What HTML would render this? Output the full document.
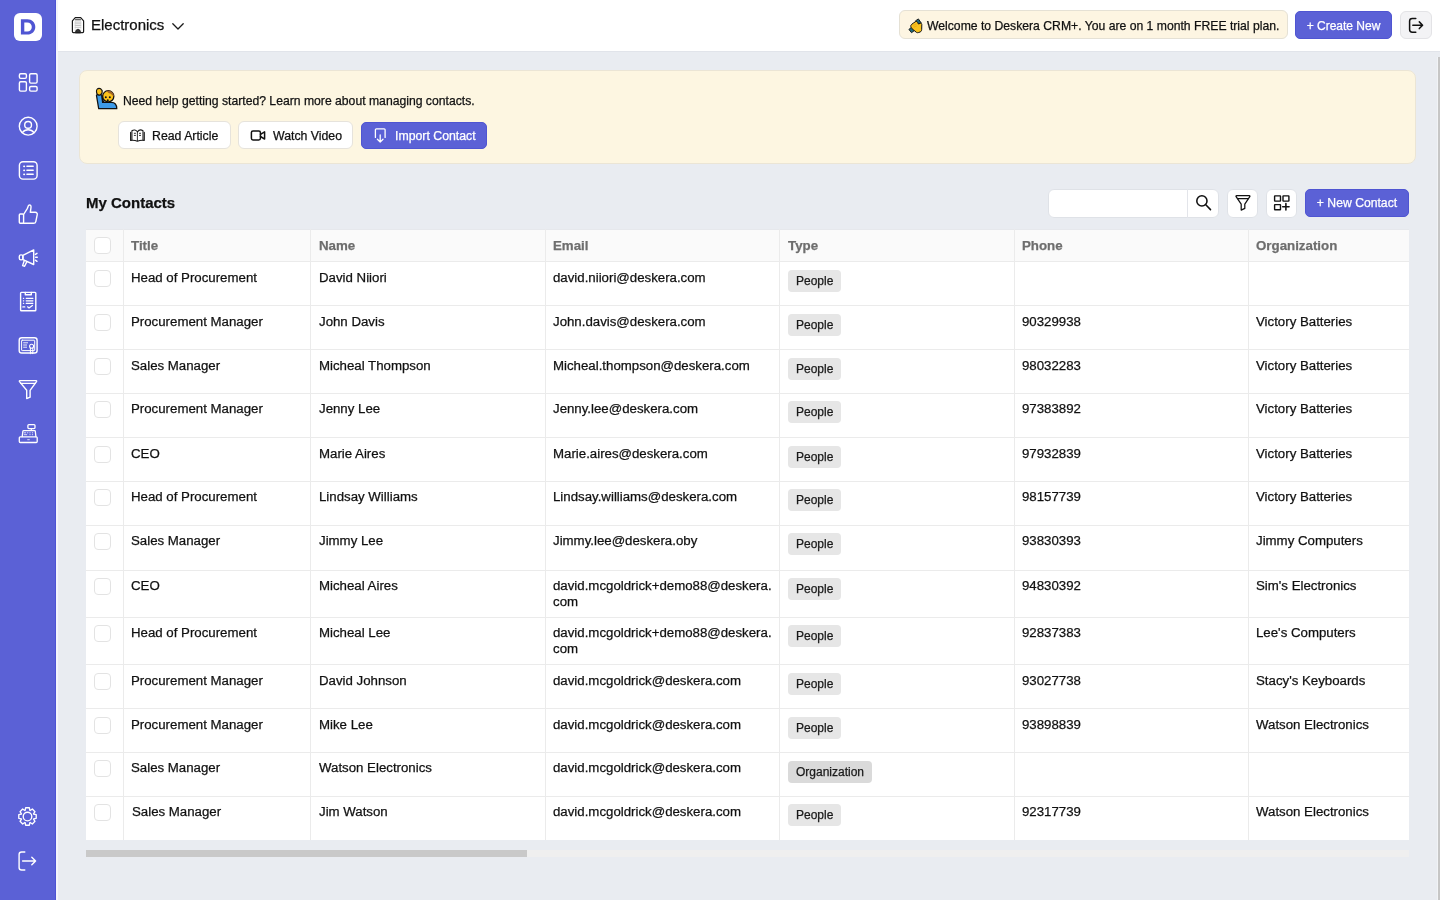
<!DOCTYPE html>
<html><head><meta charset="utf-8">
<style>
*{box-sizing:border-box;margin:0;padding:0}
html,body{width:1440px;height:900px;overflow:hidden}
body{font-family:"Liberation Sans",sans-serif;background:#e9ecf1;color:#111;position:relative}
#wrap div{-webkit-text-stroke:0.25px currentColor}
.abs{position:absolute}
#sidebar{left:0;top:0;width:56px;height:900px;background:#5b61d6}
#sbline{left:56px;top:0;width:2px;height:900px;background:#f4f5fb}
#logo{left:14px;top:13px;width:28px;height:28px;background:#fff;border-radius:6px}
#logo span{position:absolute;left:0;top:0;width:28px;text-align:center;font-weight:bold;font-size:21px;line-height:28px;color:#5b61d6}
.sico{position:absolute;left:18px;width:20px;height:20px}
#header{left:58px;top:0;width:1382px;height:51px;background:#fff}
#hshadow{left:58px;top:51px;width:1382px;height:1px;background:#e1e4ea}
#org{left:91px;top:15px;font-size:15px;line-height:19px;color:#111}
#welcome{left:899px;top:10px;width:389px;height:29px;background:#fdf5e2;border:1px solid #e5e1d5;border-radius:6px;font-size:12.2px;line-height:31px;padding-left:27px;color:#111;white-space:nowrap}
.btnblue{background:#5b61d6;color:#fff;border-radius:5px;font-size:12px;text-align:center;white-space:nowrap;border:1px solid #4f55d2}
#create{left:1295px;top:11px;width:97px;height:28px;line-height:28px}
#logout{left:1400px;top:11px;width:32px;height:28px;background:#f3f3f5;border:1px solid #e3e3e6;border-radius:6px}
#help{left:79px;top:70px;width:1337px;height:94px;background:#fdf6e1;border:1px solid #ebe5d5;border-radius:8px}
#helptext{left:123px;top:94px;font-size:12.2px;line-height:14px;color:#111;white-space:nowrap}
.hbtn{height:28px;background:#fff;border:1px solid #e6e3dc;border-radius:6px;font-size:12.3px;line-height:28px;white-space:nowrap;color:#111}
#mycontacts{left:86px;top:194px;font-size:15px;line-height:18px;font-weight:bold;color:#111}
#search{left:1048px;top:189px;width:171px;height:29px;background:#fff;border:1px solid #dfe2e7;border-radius:6px}
#searchdiv{left:1187px;top:189px;width:1px;height:29px;background:#e3e5ea}
.tbtn{top:189px;width:31px;height:29px;background:#fff;border:1px solid #dfe2e7;border-radius:6px}
#newcontact{left:1305px;top:189px;width:104px;height:28px;line-height:27px;font-size:12.2px}
#tbl{left:86px;top:229px;width:1323px;height:611px;background:#fff}
#thead{left:86px;top:230px;width:1323px;height:31px;background:#fafafa}
.hl{position:absolute;left:86px;width:1323px;height:1px;background:#ebebeb}
.vl{position:absolute;top:229px;width:1px;height:611px;background:#ebebeb}
.th{position:absolute;top:238px;font-size:13.3px;font-weight:bold;color:#6e6e6e;line-height:15px;white-space:nowrap}
.td{position:absolute;font-size:13.25px;line-height:15.5px;color:#111;white-space:nowrap}
.badge{position:absolute;height:21.5px;background:#e6e6e6;border-radius:4px;font-size:12px;line-height:23px;padding:0 8px;color:#1a1a1a;white-space:nowrap}
.cb{position:absolute;left:94px;width:17px;height:17px;border:1px solid #e3e3e3;border-radius:4px;background:#fff}
#hscroll{left:86px;top:850px;width:1323px;height:7px;background:#efefef}
#hthumb{left:86px;top:850px;width:441px;height:7px;background:#c9c9c9}
#vscroll{left:1437px;top:57px;width:3px;height:843px;background:#d0d2d6}
</style></head>
<body>
<div id="wrap" style="position:absolute;left:0;top:0;width:1440px;height:900px;will-change:transform">
<div id="sidebar" class="abs"></div>
<div id="sbline" class="abs"></div>
<div class="abs" style="left:55px;top:0;width:1px;height:900px;background:#4d53d4"></div>
<div class="abs" style="left:1437px;top:57px;width:1px;height:843px;background:#f1f3f6"></div>
<div class="abs" style="left:1438px;top:57px;width:2px;height:843px;background:#c6c6c6"></div>
<div id="logo" class="abs"></div>
<svg class="abs" style="left:0;top:0" width="56" height="56" viewBox="0 0 56 56"><path fill="#4f55d3" fill-rule="evenodd" d="M20.9 19.35 H27.4 C31.9 19.35 35.3 22.7 35.3 27 C35.3 31.3 31.9 34.6 27.4 34.6 H20.9 Z M24.3 22.4 V31.6 H27.2 C30 31.6 31.8 29.6 31.8 27 C31.8 24.4 30 22.4 27.2 22.4 Z"/></svg>

<div id="header" class="abs"></div>
<div id="hshadow" class="abs"></div>
<div id="org" class="abs">Electronics</div>

<div id="welcome" class="abs">Welcome to Deskera CRM+. You are on 1 month FREE trial plan.</div>
<div id="create" class="abs btnblue">+ Create New</div>
<div id="logout" class="abs"></div>

<div id="help" class="abs"></div>
<div id="helptext" class="abs">Need help getting started? Learn more about managing contacts.</div>
<div class="abs hbtn" style="left:118px;top:121px;width:113px;padding-left:33px">Read Article</div>
<div class="abs hbtn" style="left:238px;top:121px;width:115px;padding-left:34px">Watch Video</div>
<div class="abs btnblue" style="left:361px;top:122px;width:126px;height:27px;line-height:27px;text-align:left;padding-left:33px;font-size:12.3px">Import Contact</div>

<div id="mycontacts" class="abs">My Contacts</div>
<div id="search" class="abs"></div>
<div id="searchdiv" class="abs"></div>
<div class="abs tbtn" style="left:1227px"></div>
<div class="abs tbtn" style="left:1266px"></div>
<div id="newcontact" class="abs btnblue">+ New Contact</div>

<div id="tbl" class="abs"></div>
<div id="thead" class="abs"></div>
<div id="rows"><div class="hl" style="top:229px;background:#e6e8ec"></div>
<div class="hl" style="top:261px"></div>
<div class="hl" style="top:305px"></div>
<div class="hl" style="top:349px"></div>
<div class="hl" style="top:393px"></div>
<div class="hl" style="top:437px"></div>
<div class="hl" style="top:481px"></div>
<div class="hl" style="top:525px"></div>
<div class="hl" style="top:570px"></div>
<div class="hl" style="top:617px"></div>
<div class="hl" style="top:664px"></div>
<div class="hl" style="top:708px"></div>
<div class="hl" style="top:752px"></div>
<div class="hl" style="top:796px"></div>
<div class="vl" style="left:123px"></div>
<div class="vl" style="left:310px"></div>
<div class="vl" style="left:545px"></div>
<div class="vl" style="left:779px"></div>
<div class="vl" style="left:1014px"></div>
<div class="vl" style="left:1248px"></div>
<div class="cb" style="top:237px"></div>
<div class="th" style="left:131px">Title</div>
<div class="th" style="left:319px">Name</div>
<div class="th" style="left:553px">Email</div>
<div class="th" style="left:788px">Type</div>
<div class="th" style="left:1022px">Phone</div>
<div class="th" style="left:1256px">Organization</div>
<div class="cb" style="top:270px"></div>
<div class="td" style="left:131px;top:270px">Head of Procurement</div>
<div class="td" style="left:319px;top:270px">David Niiori</div>
<div class="td" style="left:553px;top:270px">david.niiori@deskera.com</div>
<div class="badge" style="left:788px;top:270px">People</div>
<div class="cb" style="top:314px"></div>
<div class="td" style="left:131px;top:314px">Procurement Manager</div>
<div class="td" style="left:319px;top:314px">John Davis</div>
<div class="td" style="left:553px;top:314px">John.davis@deskera.com</div>
<div class="badge" style="left:788px;top:314px">People</div>
<div class="td" style="left:1022px;top:314px">90329938</div>
<div class="td" style="left:1256px;top:314px">Victory Batteries</div>
<div class="cb" style="top:358px"></div>
<div class="td" style="left:131px;top:358px">Sales Manager</div>
<div class="td" style="left:319px;top:358px">Micheal Thompson</div>
<div class="td" style="left:553px;top:358px">Micheal.thompson@deskera.com</div>
<div class="badge" style="left:788px;top:358px">People</div>
<div class="td" style="left:1022px;top:358px">98032283</div>
<div class="td" style="left:1256px;top:358px">Victory Batteries</div>
<div class="cb" style="top:401px"></div>
<div class="td" style="left:131px;top:401px">Procurement Manager</div>
<div class="td" style="left:319px;top:401px">Jenny Lee</div>
<div class="td" style="left:553px;top:401px">Jenny.lee@deskera.com</div>
<div class="badge" style="left:788px;top:401px">People</div>
<div class="td" style="left:1022px;top:401px">97383892</div>
<div class="td" style="left:1256px;top:401px">Victory Batteries</div>
<div class="cb" style="top:446px"></div>
<div class="td" style="left:131px;top:446px">CEO</div>
<div class="td" style="left:319px;top:446px">Marie Aires</div>
<div class="td" style="left:553px;top:446px">Marie.aires@deskera.com</div>
<div class="badge" style="left:788px;top:446px">People</div>
<div class="td" style="left:1022px;top:446px">97932839</div>
<div class="td" style="left:1256px;top:446px">Victory Batteries</div>
<div class="cb" style="top:489px"></div>
<div class="td" style="left:131px;top:489px">Head of Procurement</div>
<div class="td" style="left:319px;top:489px">Lindsay Williams</div>
<div class="td" style="left:553px;top:489px">Lindsay.williams@deskera.com</div>
<div class="badge" style="left:788px;top:489px">People</div>
<div class="td" style="left:1022px;top:489px">98157739</div>
<div class="td" style="left:1256px;top:489px">Victory Batteries</div>
<div class="cb" style="top:533px"></div>
<div class="td" style="left:131px;top:533px">Sales Manager</div>
<div class="td" style="left:319px;top:533px">Jimmy Lee</div>
<div class="td" style="left:553px;top:533px">Jimmy.lee@deskera.oby</div>
<div class="badge" style="left:788px;top:533px">People</div>
<div class="td" style="left:1022px;top:533px">93830393</div>
<div class="td" style="left:1256px;top:533px">Jimmy Computers</div>
<div class="cb" style="top:578px"></div>
<div class="td" style="left:131px;top:578px">CEO</div>
<div class="td" style="left:319px;top:578px">Micheal Aires</div>
<div class="td" style="left:553px;top:578px">david.mcgoldrick+demo88@deskera.<br>com</div>
<div class="badge" style="left:788px;top:578px">People</div>
<div class="td" style="left:1022px;top:578px">94830392</div>
<div class="td" style="left:1256px;top:578px">Sim's Electronics</div>
<div class="cb" style="top:625px"></div>
<div class="td" style="left:131px;top:625px">Head of Procurement</div>
<div class="td" style="left:319px;top:625px">Micheal Lee</div>
<div class="td" style="left:553px;top:625px">david.mcgoldrick+demo88@deskera.<br>com</div>
<div class="badge" style="left:788px;top:625px">People</div>
<div class="td" style="left:1022px;top:625px">92837383</div>
<div class="td" style="left:1256px;top:625px">Lee's Computers</div>
<div class="cb" style="top:673px"></div>
<div class="td" style="left:131px;top:673px">Procurement Manager</div>
<div class="td" style="left:319px;top:673px">David Johnson</div>
<div class="td" style="left:553px;top:673px">david.mcgoldrick@deskera.com</div>
<div class="badge" style="left:788px;top:673px">People</div>
<div class="td" style="left:1022px;top:673px">93027738</div>
<div class="td" style="left:1256px;top:673px">Stacy's Keyboards</div>
<div class="cb" style="top:717px"></div>
<div class="td" style="left:131px;top:717px">Procurement Manager</div>
<div class="td" style="left:319px;top:717px">Mike Lee</div>
<div class="td" style="left:553px;top:717px">david.mcgoldrick@deskera.com</div>
<div class="badge" style="left:788px;top:717px">People</div>
<div class="td" style="left:1022px;top:717px">93898839</div>
<div class="td" style="left:1256px;top:717px">Watson Electronics</div>
<div class="cb" style="top:760px"></div>
<div class="td" style="left:131px;top:760px">Sales Manager</div>
<div class="td" style="left:319px;top:760px">Watson Electronics</div>
<div class="td" style="left:553px;top:760px">david.mcgoldrick@deskera.com</div>
<div class="badge" style="left:788px;top:761px;background:#dadada">Organization</div>
<div class="cb" style="top:804px"></div>
<div class="td" style="left:132px;top:804px">Sales Manager</div>
<div class="td" style="left:319px;top:804px">Jim Watson</div>
<div class="td" style="left:553px;top:804px">david.mcgoldrick@deskera.com</div>
<div class="badge" style="left:788px;top:804px">People</div>
<div class="td" style="left:1022px;top:804px">92317739</div>
<div class="td" style="left:1256px;top:804px">Watson Electronics</div></div><!--rows-->
<div id="hscroll" class="abs"></div>
<div id="hthumb" class="abs"></div>
<!--icons-->
<svg class="abs" style="left:0;top:0" width="58" height="900" viewBox="0 0 58 900" fill="none" stroke="#fff" stroke-width="1.4" stroke-linecap="round" stroke-linejoin="round">
 <!-- dashboard -->
 <rect x="19.4" y="73.8" width="7" height="4.6" rx="1.3"/>
 <rect x="19.4" y="81.8" width="7" height="9.3" rx="1.3"/>
 <rect x="29.6" y="73.8" width="7.5" height="9.3" rx="1.3"/>
 <rect x="29.6" y="86.5" width="7.5" height="4.6" rx="1.3"/>
 <!-- user -->
 <circle cx="28.2" cy="126.2" r="8.9"/>
 <circle cx="28.1" cy="124.9" r="3.4"/>
 <path d="M22.3 132.6 C23.8 130.6 25.8 129.8 28.1 129.8 C30.4 129.8 32.5 130.6 34 132.6"/>
 <!-- list -->
 <rect x="19.4" y="161.7" width="17.7" height="17.4" rx="3.6"/>
 <path d="M24 166.3h0.3M24 170.3h0.3M24 174.3h0.3" stroke-width="1.8"/>
 <path d="M26.9 166.3h6.3M26.9 170.3h6.3M26.9 174.3h6.3"/>
 <!-- thumbs up -->
 <rect x="19.3" y="214" width="4.3" height="9.3" rx="1"/>
 <path d="M23.6 214.5 L27.4 208.3 C27.9 207.2 28.1 205.6 29 205.1 C30.4 204.5 31.2 205.8 31 207.3 L30.3 212.3 L35.3 212.3 C36.8 212.3 37.6 213.5 37.2 214.9 L35.8 221.6 C35.5 222.8 34.8 223.3 33.6 223.3 L23.6 223.3"/>
 <!-- megaphone -->
 <rect x="19.3" y="254.9" width="3.6" height="5" rx="1.6"/>
 <path d="M22.9 255.3 L33.7 249.9 L33.7 264.5 L22.9 259.6 Z"/>
 <path d="M24.3 260.5 L22.6 265.6 L24.6 266.3 L26.9 261.6"/>
 <path d="M35.4 254.4 L37 253.3 M35.6 257.3 H37.3 M35.4 260.2 L37 261.3"/>
 <!-- clipboard -->
 <rect x="20.6" y="292.4" width="15.2" height="18.4" rx="0.8"/>
 <path d="M25.3 292.4 V294.8 H31.3 V292.4"/>
 <path d="M23.4 298.3h0.3M23.4 300.8h0.3M23.4 303.3h0.3" stroke-width="1.2"/>
 <path d="M26.2 298.3h6.7M26.2 300.8h6.7M26.2 303.3h6.7" stroke-width="1.2"/>
 <path d="M22.8 306.9h2" stroke-width="1.2"/>
 <path d="M27.6 306.8 L29 308 L32.4 305.4" stroke-width="1.2"/>
 <!-- certificate -->
 <rect x="19.2" y="337.8" width="17.9" height="15.2" rx="2.6"/>
 <rect x="21.6" y="340.2" width="13.1" height="10.4" rx="0.6" stroke-width="1"/>
 <path d="M23.6 342.8h4M23.6 345h3M23.6 347.2h3" stroke-width="0.9"/>
 <circle cx="31.6" cy="346.2" r="2" stroke-width="1.1"/>
 <path d="M30.4 348.2 V353.8 L31.6 352.8 L32.8 353.8 V348.2" stroke-width="1"/>
 <!-- funnel -->
 <path d="M19.8 380.6 H36.2 C36.7 380.6 36.8 381.1 36.5 381.6 L30.1 390.3 V397.2 L26.7 398.6 V390.3 L19.5 381.6 C19.2 381.1 19.3 380.6 19.8 380.6 Z"/>
 <path d="M20.8 383.4 H35.2"/>
 <!-- cash register -->
 <rect x="27.9" y="424.6" width="7.1" height="4" rx="1" stroke-width="1.3"/>
 <path d="M31.3 428.8 V430.5" stroke-width="1.2"/>
 <path d="M22.2 436.5 L22.9 431.2 C23 430.8 23.3 430.6 23.7 430.6 H34.6 C35 430.6 35.3 430.8 35.3 431.2 L35.9 436.5" stroke-width="1.3"/>
 <rect x="19.3" y="436.8" width="17.9" height="5.7" rx="1" stroke-width="1.3"/>
 <path d="M24.2 432.8h1.6M27.5 432.8h0.4M29.8 432.8h0.4M32.3 432.8h0.4M24.2 434.7h2.6M29.8 434.7h0.4M32.3 434.7h0.4M27.7 439.7h1.6" stroke-width="0.8"/>
 <!-- gear -->
 <g transform="translate(27.5 816.5)">
  <path d="M-2.37 -6.16 L-1.85 -8.71 L1.85 -8.71 L2.37 -6.16 L2.68 -6.03 L4.85 -7.46 L7.46 -4.85 L6.03 -2.68 L6.16 -2.37 L8.71 -1.85 L8.71 1.85 L6.16 2.37 L6.03 2.68 L7.46 4.85 L4.85 7.46 L2.68 6.03 L2.37 6.16 L1.85 8.71 L-1.85 8.71 L-2.37 6.16 L-2.68 6.03 L-4.85 7.46 L-7.46 4.85 L-6.03 2.68 L-6.16 2.37 L-8.71 1.85 L-8.71 -1.85 L-6.16 -2.37 L-6.03 -2.68 L-7.46 -4.85 L-4.85 -7.46 L-2.68 -6.03 Z" stroke-width="1.35"/>
  <circle r="4.3" stroke-width="1.35"/>
 </g>
 <!-- logout -->
 <path d="M24.8 852 H21.6 C20 852 19.1 852.9 19.1 854.5 V867.5 C19.1 869.1 20 870 21.6 870 H24.8" stroke-width="1.4"/>
 <path d="M22.6 861 H35.6 M31.8 857.2 L35.6 861 L31.8 864.8" stroke-width="1.4"/>
</svg>
<!-- header icons -->
<svg class="abs" style="left:66px;top:12px" width="124" height="26" viewBox="66 12 124 26" fill="none" stroke="#1a1a1a" stroke-linejoin="round" stroke-linecap="round">
 <path d="M75.3 17.6 H80.7 L83.6 20.9 V31.6 C83.6 32.2 83.2 32.6 82.6 32.6 H73.3 C72.7 32.6 72.4 32.2 72.4 31.6 V20.9 Z" stroke-width="1.2" fill="#fff"/>
 <path d="M75.5 19.8 H80.5" stroke-width="1.1" stroke="#333"/>
 <path d="M75.2 22.1 H80.8 M75.2 23.8 H80.8 M75.2 25.5 H80.8 M75.2 27.3 H80.8" stroke-width="0.7" stroke="#aaa"/>
 <path d="M75.2 21 V32 M80.8 21 V32" stroke-width="0.6" stroke="#d0d0d0"/>
 <path d="M75.4 32.5 C75.6 30.4 76.6 29.3 78 29.3 C79.4 29.3 80.4 30.4 80.6 32.5 Z" fill="#333" stroke-width="0.8"/>
 <path d="M172.8 23.8 L178 29 L183.2 23.8" stroke-width="1.3"/>
</svg>
<svg class="abs" style="left:1404px;top:14px" width="24" height="22" viewBox="1404 14 24 22" fill="none" stroke="#111" stroke-width="1.5" stroke-linecap="round" stroke-linejoin="round">
 <path d="M1415.8 18.4 H1412.3 C1410.6 18.4 1409.6 19.4 1409.6 21.1 V29.5 C1409.6 31.2 1410.6 32.2 1412.3 32.2 H1415.8"/>
 <path d="M1412.8 25.2 H1422.4 M1419.3 21.9 L1422.6 25.2 L1419.3 28.6"/>
</svg>
<!-- clap emoji -->
<svg class="abs" style="left:905px;top:16px" width="22" height="20" viewBox="0 0 22 20" stroke="#111" stroke-linejoin="round">
 <path d="M10.4 4.9 L13.4 2.9 L16.3 7.1 L13.2 9.2 Z" fill="#1d6a80" stroke-width="0.9"/>
 <path d="M3.9 13.4 L6.8 11.1 L9.4 14.6 L6.5 16.7 Z" fill="#1d6a80" stroke-width="0.9"/>
 <path d="M5.8 9.6 C6.2 8.6 7.2 7.8 8.2 7.2 L10.6 5.6 C11.3 5.2 12.2 5.6 12.6 6.3 L13.4 8 L15.4 7.3 C16.2 7.1 16.8 7.6 16.8 8.4 L16.7 13.4 C16.7 14.6 16.2 15.5 15.1 16 L13.3 16.6 C12.4 16.9 11.6 16.6 11 16 L7.8 13.4 C6.8 12.6 5.5 11 5.8 9.6 Z" fill="#f8c21e" stroke-width="1"/>
 <path d="M8.2 9.4 L11.2 8 M8.6 11.2 L11.8 9.8" stroke="#e2a514" stroke-width="0.7" fill="none"/>
</svg>
<!-- raising hand emoji -->
<svg class="abs" style="left:92px;top:85px" width="30" height="28" viewBox="0 0 30 28" stroke="#111" stroke-linejoin="round">
 <path d="M6.7 23.7 L4.5 10.6 C4.4 10 4.8 9.6 5.4 9.6 H8.9 C9.5 9.6 9.9 10 9.9 10.6 L10.6 17.4 H19.4 C22.8 17.4 24.7 19.9 24.8 23.7 Z" fill="#3d9be9" stroke-width="1.25"/>
 <path d="M4.5 6.6 C4.3 4.6 5.4 3.4 7.1 3.4 C8.3 3.4 9.2 4 9.6 5 C10.3 5.4 10.4 6.3 10 6.9 C10.3 7.6 10 8.5 9.3 8.8 C9 9.6 8.3 10.1 7.3 10.1 C5.5 10.1 4.6 8.8 4.5 6.6 Z" fill="#fcc21b" stroke-width="1.15"/>
 <path d="M9.4 9.9 L10.3 17.9 L14.2 17.9 C12 16.9 10.8 14.6 10.8 11.5 Z" fill="#111" stroke="none"/>
 <circle cx="16.25" cy="11.3" r="5.6" fill="#fcc21b" stroke-width="1.3"/>
 <path d="M14.6 6 C15.2 5.8 15.7 5.7 16.2 5.7 C19.4 5.7 21.8 8.1 21.9 11.2 C20.6 10.9 19.6 10 19 8.8 C17.6 8.6 15.6 7.6 14.6 6 Z" fill="#a1652b" stroke="none"/>
 <circle cx="13.8" cy="12.3" r="1" fill="#111" stroke="none"/>
 <circle cx="17.8" cy="12.3" r="1" fill="#111" stroke="none"/>
 <ellipse cx="15.8" cy="15.2" rx="1" ry="0.9" fill="#111" stroke="none"/>
</svg>
<!-- button icons -->
<svg class="abs" style="left:126px;top:125px" width="22" height="20" viewBox="126 125 22 20" fill="none" stroke="#1a1a1a" stroke-linejoin="round" stroke-linecap="round">
 <path d="M130.6 132.4 V140.4 C133.5 140.1 135.3 140.3 137.4 141.3 C139.5 140.3 141.3 140.1 144.3 140.4 V132.4" stroke-width="1.1"/>
 <path d="M131.9 140 V130.8 C133.9 129.4 136 129.8 137.4 131.8 C138.9 129.8 141 129.4 143 130.8 V140" stroke-width="1.1"/>
 <path d="M137.4 131.8 V140.6" stroke-width="0.9"/>
 <path d="M134.3 133.3h1.2M134.3 135.4h1.2M139.4 133.3h1.2M139.4 135.4h1.2" stroke-width="0.9"/>
</svg>
<svg class="abs" style="left:246px;top:125px" width="24" height="20" viewBox="246 125 24 20" fill="none" stroke="#111" stroke-width="1.5" stroke-linejoin="round" stroke-linecap="round">
 <rect x="251.4" y="131" width="9" height="8.9" rx="1.6"/>
 <path d="M260.5 134.4 L264.6 131.8 V139.1 L260.5 136.5"/>
</svg>
<svg class="abs" style="left:368px;top:125px" width="24" height="22" viewBox="368 125 24 22" fill="none" stroke="#fff" stroke-width="1.3" stroke-linejoin="round" stroke-linecap="round">
 <path d="M375.4 137.4 V129.8 C375.4 129.2 375.8 128.8 376.4 128.8 H384.1 C384.7 128.8 385.1 129.2 385.1 129.8 V137.4"/>
 <path d="M380.2 135 V141.9 M377.4 139.3 L380.2 142.1 L383 139.3"/>
</svg>
<!-- toolbar icons -->
<svg class="abs" style="left:1190px;top:190px" width="110" height="26" viewBox="1190 190 110 26" fill="none" stroke="#111" stroke-width="1.55" stroke-linejoin="round" stroke-linecap="round">
 <circle cx="1201.9" cy="200.9" r="5.1"/>
 <path d="M1205.8 204.8 L1210.5 209.6"/>
 <path d="M1236.6 195.7 H1249.3 C1249.9 195.7 1250.1 196.2 1249.8 196.7 L1244.8 204.2 V208.4 L1241.2 210.1 V204.2 L1236.1 196.7 C1235.8 196.2 1236 195.7 1236.6 195.7 Z" stroke-width="1.25"/>
 <path d="M1237.9 198.6 H1248.1" stroke-width="1.1"/>
 <rect x="1274.6" y="195.9" width="5.9" height="5.2" rx="0.4" stroke-width="1.4"/>
 <rect x="1283" y="195.9" width="5.9" height="5.2" rx="0.4" stroke-width="1.4"/>
 <rect x="1274.6" y="204.6" width="5.9" height="5.2" rx="0.4" stroke-width="1.4"/>
 <path d="M1285.9 203.6 V210 M1282.7 206.8 H1289.1"/>
</svg>
<!--/icons-->
</div>
</body></html>
